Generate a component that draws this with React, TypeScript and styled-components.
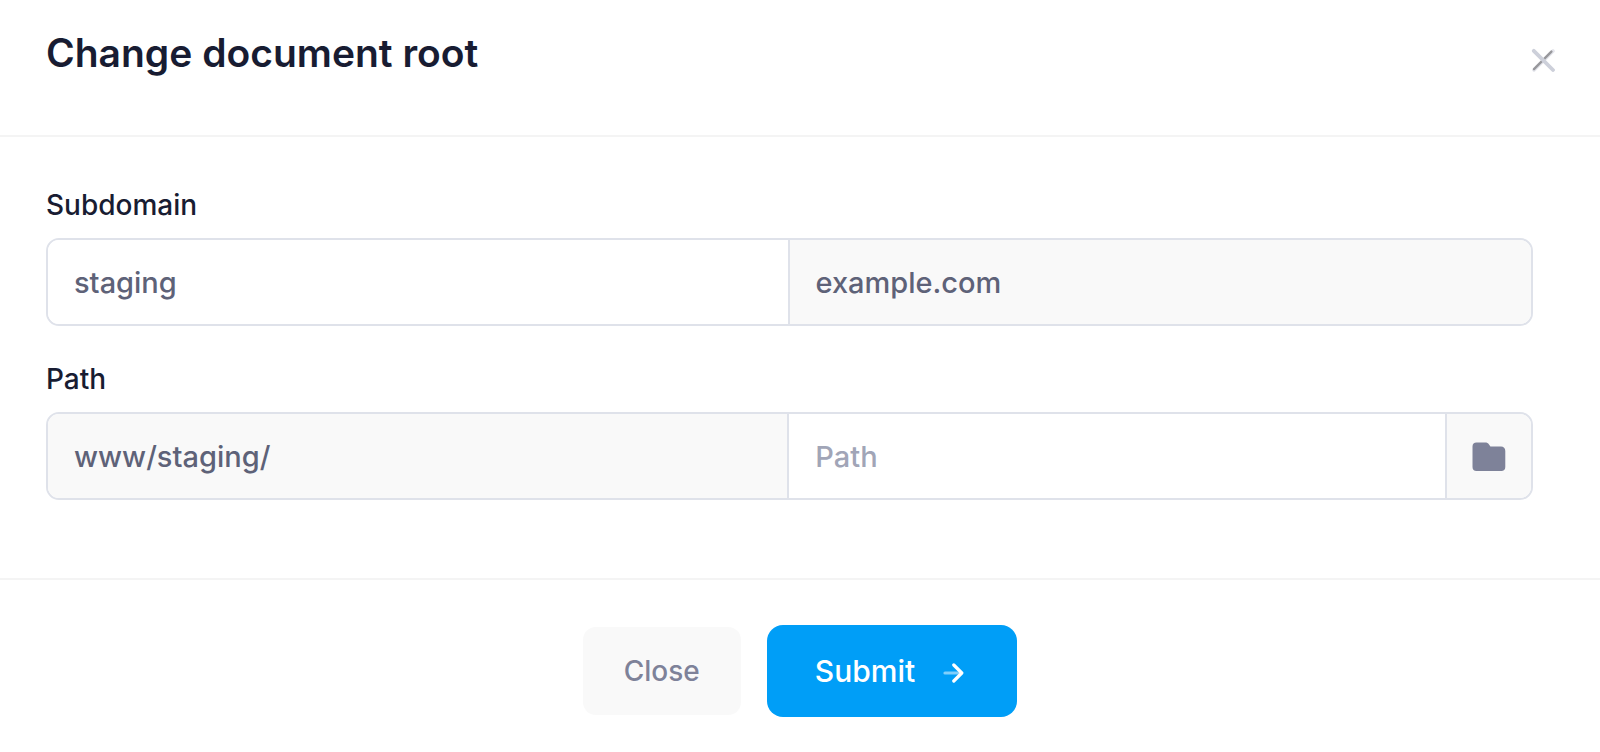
import React from "react";
import styled, { createGlobalStyle, css } from "styled-components";

const GlobalStyle = createGlobalStyle`
  *, *::before, *::after {
    box-sizing: border-box;
  }
  body {
    margin: 0;
    background: #ffffff;
    color: #181c32;
    font-family: Inter, "Liberation Sans", sans-serif;
    font-size: 28px;
    font-weight: 500;
  }
  button, input {
    font: inherit;
  }
`;

const Dialog = styled.form`
  display: flex;
  flex-direction: column;
`;

const Header = styled.header`
  display: flex;
  justify-content: space-between;
  align-items: flex-start;
  padding: 29px 45px 58px 46px;
  border-bottom: 2px solid #f4f4f4;
`;

const Title = styled.h1`
  margin: 0;
  font-size: 39px;
  font-weight: 600;
  line-height: 48px;
`;

const IconButton = styled.button`
  display: flex;
  margin-top: 19px;
  padding: 0;
  border: 0;
  background: transparent;
  cursor: pointer;
`;

const Body = styled.div`
  display: flex;
  flex-direction: column;
  gap: 32px;
  padding: 47px 67px 78px 46px;
`;

const Field = styled.div`
  display: flex;
  flex-direction: column;
  gap: 12px;
`;

const Label = styled.label`
  line-height: 42px;
`;

const InputGroup = styled.div`
  display: flex;
  height: 88px;
  border: 2px solid #dfe2ea;
  border-radius: 13px;
  overflow: hidden;
`;

const segment = css`
  border: 0;
  border-right: 2px solid #dfe2ea;
  &:last-child {
    border-right: 0;
  }
`;

const TextInput = styled.input<{ $basis: string }>`
  ${segment}
  flex: 1 1 ${(p) => p.$basis};
  min-width: 0;
  padding: 0 26px;
  outline: 0;
  border-radius: 0;
  background: #ffffff;
  color: #5e6278;
  font-size: 29px;
  &::placeholder {
    color: #a1a5b7;
    opacity: 1;
  }
  &:read-only {
    background: #f9f9f9;
  }
`;

const BrowseButton = styled.button`
  ${segment}
  display: flex;
  flex: 0 0 84px;
  align-items: center;
  justify-content: center;
  padding: 0;
  background: #f9f9f9;
  cursor: pointer;
`;

const Footer = styled.footer`
  display: flex;
  justify-content: center;
  align-items: center;
  gap: 26px;
  padding: 45px 46px 35px;
  border-top: 2px solid #f4f4f4;
`;

const Button = styled.button<{ $primary?: boolean }>`
  display: flex;
  align-items: center;
  gap: 28px;
  border: 0;
  cursor: pointer;
  height: ${(p) => (p.$primary ? 92 : 88)}px;
  padding: ${(p) => (p.$primary ? "0 53px 0 48px" : "0 41px")};
  border-radius: ${(p) => (p.$primary ? 16 : 13)}px;
  background: ${(p) => (p.$primary ? "#009ef7" : "#f9f9f9")};
  color: ${(p) => (p.$primary ? "#ffffff" : "#7e8299")};
  font-size: ${(p) => (p.$primary ? 30 : 28)}px;
`;

function CloseIcon() {
  return (
    <svg width="24" height="24" viewBox="0 0 24 24" fill="none" strokeLinecap="round" aria-hidden="true">
      <path d="M3 22L22 3" stroke="#e5e6ec" strokeWidth="3.6" />
      <path d="M3 21.2L20.4 3.6" stroke="#98989c" strokeWidth="2.4" />
      <path d="M2.8 2.8L22 22" stroke="#cdd0da" strokeWidth="3.8" />
    </svg>
  );
}

function FolderIcon() {
  return (
    <svg width="34" height="32" viewBox="0 0 34 32" aria-hidden="true">
      <path
        d="M4.5 2.5H13C15 2.5 16 3.1 17 4.5L18.4 6.5H29C31.5 6.5 33.3 8.1 33.3 11V27C33.3 29.5 31.8 31 29.3 31H4.5C2 31 .5 29.5 .5 27V6.5C.5 4 2 2.5 4.5 2.5Z"
        fill="#7e8299"
      />
    </svg>
  );
}

function ArrowIcon() {
  return (
    <svg width="21" height="24" viewBox="0 0 21 24" fill="none" stroke="#ffffff" strokeWidth="3.2" strokeLinecap="round" aria-hidden="true">
      <path d="M2 14H15.5" opacity=".5" />
      <path d="M10.8 6L18.8 14L10.8 22" strokeLinejoin="round" />
    </svg>
  );
}

export default function App() {
  return (
    <>
      <GlobalStyle />
      <Dialog onSubmit={(e) => e.preventDefault()}>
        <Header>
          <Title>Change document root</Title>
          <IconButton type="button" aria-label="Close dialog">
            <CloseIcon />
          </IconButton>
        </Header>
        <Body>
          <Field>
            <Label htmlFor="subdomain">Subdomain</Label>
            <InputGroup>
              <TextInput $basis="50%" id="subdomain" defaultValue="staging" />
              <TextInput $basis="50%" aria-label="Domain" value="example.com" readOnly />
            </InputGroup>
          </Field>
          <Field>
            <Label htmlFor="path">Path</Label>
            <InputGroup>
              <TextInput $basis="53%" aria-label="Base path" value="www/staging/" readOnly />
              <TextInput $basis="47%" id="path" placeholder="Path" />
              <BrowseButton type="button" aria-label="Browse folders">
                <FolderIcon />
              </BrowseButton>
            </InputGroup>
          </Field>
        </Body>
        <Footer>
          <Button type="button">Close</Button>
          <Button type="submit" $primary>
            Submit
            <ArrowIcon />
          </Button>
        </Footer>
      </Dialog>
    </>
  );
}
